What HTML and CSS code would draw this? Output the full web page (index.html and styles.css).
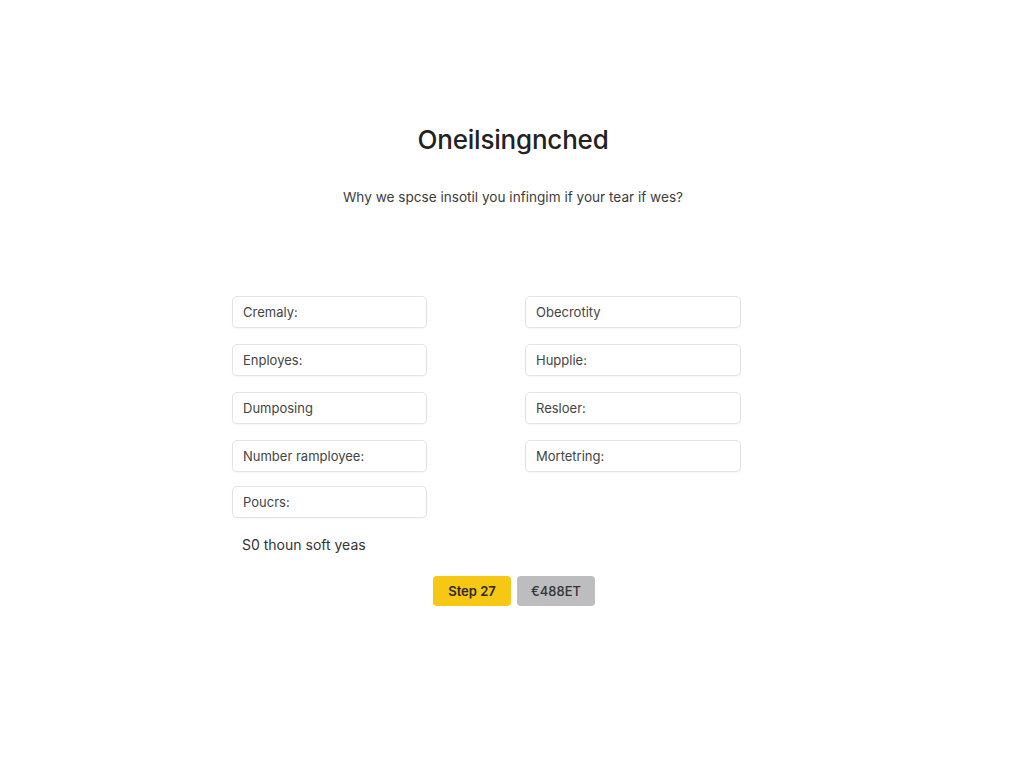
FILE: index.html
```html
<!DOCTYPE html>
<html lang="en">
<head>
<meta charset="utf-8">
<title>Oneilsingnched</title>
<link rel="stylesheet" href="styles.css">
</head>
<body>
<main class="page">
  <header class="intro">
    <h1 class="title">Oneilsingnched</h1>
    <p class="lead">Why we spcse insotil you infingim if your tear if wes?</p>
  </header>

  <form class="form">
    <div class="fields">
      <div class="col col-left">
        <input class="field" type="text" placeholder="Cremaly:">
        <input class="field" type="text" placeholder="Enployes:">
        <input class="field" type="text" placeholder="Dumposing">
        <input class="field" type="text" placeholder="Number ramployee:">
        <input class="field" type="text" placeholder="Poucrs:">
      </div>
      <div class="col col-right">
        <input class="field" type="text" placeholder="Obecrotity">
        <input class="field" type="text" placeholder="Hupplie:">
        <input class="field" type="text" placeholder="Resloer:">
        <input class="field" type="text" placeholder="Mortetring:">
      </div>
    </div>
    <p class="note">S0 thoun soft yeas</p>
    <div class="actions">
      <button type="button" class="btn btn-primary">Step 27</button>
      <button type="button" class="btn btn-muted">€488ET</button>
    </div>
  </form>
</main>
</body>
</html>
```

FILE: styles.css
```css
* {
  box-sizing: border-box;
}

html, body {
  margin: 0;
  background: #ffffff;
}

body {
  font-family: "Inter", "Liberation Sans", sans-serif;
  color: #333;
}

.page {
  width: 1024px;
  min-height: 768px;
  padding-top: 122px;
}

.intro {
  text-align: center;
  padding-left: 2px;
}

.title {
  margin: 0;
  font-size: 26px;
  line-height: 36px;
  font-weight: 500;
  color: #222;
  letter-spacing: -0.2px;
}

.lead {
  margin: 29px 0 0;
  font-size: 13.6px;
  line-height: 20px;
  color: #3c3c3c;
}

.form {
  margin: 0;
  padding-top: 89px;
}

.fields {
  display: flex;
  gap: 98px;
  margin-left: 232px;
}

.col {
  display: flex;
  flex-direction: column;
  gap: 16px;
}

.col-left {
  width: 195px;
}

.col-left .field:last-child {
  margin-top: -2px;
}

.col-right {
  width: 216px;
}

.field {
  display: block;
  width: 100%;
  height: 32px;
  padding: 0 10px;
  border: 1px solid #e3e3e3;
  border-radius: 5px;
  background: #fff;
  box-shadow: 0 1px 2px rgba(0, 0, 0, 0.04);
  font: 13px "Inter", "Liberation Sans", sans-serif;
  color: #333;
  outline: none;
}

.field::placeholder {
  color: #444;
  opacity: 1;
}

.note {
  margin: 17px 0 0 242px;
  font-size: 14px;
  line-height: 20px;
  color: #333;
}

.actions {
  display: flex;
  gap: 6px;
  margin: 21px 0 0 433px;
}

.btn {
  width: 78px;
  height: 30px;
  border: none;
  border-radius: 4px;
  font: 600 13px "Inter", "Liberation Sans", sans-serif;
  cursor: pointer;
}

.btn-primary {
  background: #f6c713;
  color: #2a2a2a;
}

.btn-muted {
  background: #bdbdbf;
  color: #333;
  font-weight: 500;
}
```
